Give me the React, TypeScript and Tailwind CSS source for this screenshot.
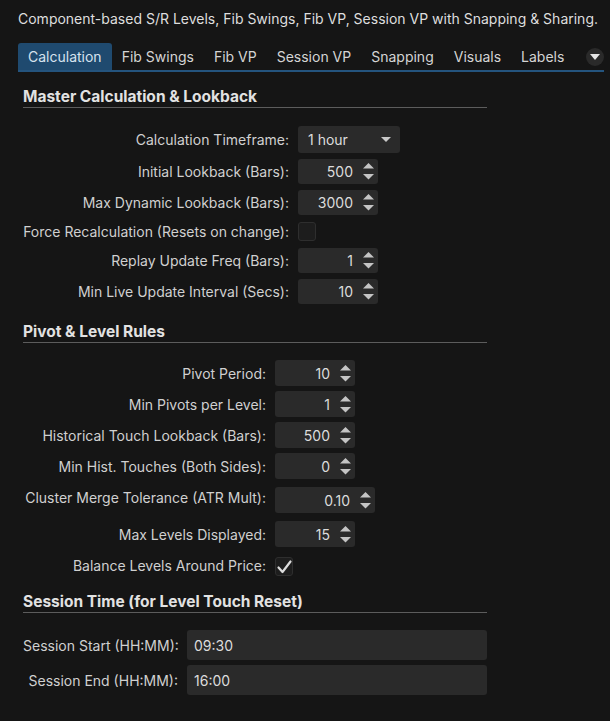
import React from "react";

const tabs = ["Calculation", "Fib Swings", "Fib VP", "Session VP", "Snapping", "Visuals", "Labels"];

function Arrows() {
  return (
    <svg width="11" height="17" viewBox="0 0 11 17" className="shrink-0 ml-[10px] mr-[4px]">
      <polygon points="0,5.5 5.5,0 11,5.5" fill="#c4c4c4" />
      <polygon points="0,11 11,11 5.5,16.5" fill="#c4c4c4" />
    </svg>
  );
}

function Spin({ value, wide, h = "h-[25px]" }: { value: string; wide?: boolean; h?: string }) {
  return (
    <div
      className={`${wide ? "w-[100px]" : "w-[80px]"} ${h} flex items-center justify-end rounded-[3px] bg-[#2a2a2a] text-[#dcdcdc]`}
    >
      <span className="flex-1 text-right">{value}</span>
      <Arrows />
    </div>
  );
}

function Check({ checked }: { checked?: boolean }) {
  return (
    <div className="w-[18px] h-[19px] rounded-[3px] bg-[#1d1d1d] border border-[#2e2e2e] flex items-center justify-center">
      {checked && (
        <svg width="15" height="14" viewBox="0 0 15 14">
          <path d="M1.5 7.5 L5.5 12 L13.5 1.5" stroke="#dcdcdc" strokeWidth="2.2" fill="none" strokeLinecap="round" strokeLinejoin="round" />
        </svg>
      )}
    </div>
  );
}

function Header({ title, className }: { title: string; className: string }) {
  return (
    <div className={`${className} h-[21px] leading-[20px] border-b border-[#5c5c5c] text-[15.5px] font-bold text-[#e2e2e2] whitespace-nowrap`}>
      {title}
    </div>
  );
}

function Label({ children, className = "" }: { children: React.ReactNode; className?: string }) {
  return <div className={`text-right text-[#d0d0d0] whitespace-nowrap ${className}`}>{children}</div>;
}

export default function App() {
  return (
    <div
      className="w-[610px] h-[721px] bg-[#151515] text-[14px] overflow-hidden"
      style={{ fontFamily: "Inter, 'Noto Sans', sans-serif" }}
    >
      <div className="px-[18px] pt-[10px] h-[27px] leading-[17px] text-[#dedede] whitespace-nowrap">
        Component-based S/R Levels, Fib Swings, Fib VP, Session VP with Snapping &amp; Sharing.
      </div>

      <div className="ml-[18px] mr-[6px] mt-[16px] h-[29px] flex items-stretch border-b-2 border-[#24547e] text-[14px]">
        {tabs.map((t, i) => (
          <div
            key={t}
            className={`px-[10px] flex items-center whitespace-nowrap rounded-t-[3px] ${
              i === 0 ? "bg-[#1f4a6f] text-[#d6e2ee]" : "text-[#d4d4d4]"
            }`}
          >
            {t}
          </div>
        ))}
        <div className="flex-1" />
        <div className="self-center w-[18px] h-[18px] rounded-full bg-[#2a2a2a] flex items-center justify-center">
          <svg width="10" height="6" viewBox="0 0 10 6">
            <polygon points="0,0 10,0 5,6" fill="#e6e6e6" />
          </svg>
        </div>
      </div>

      <div className="px-[23px] w-[464px] box-content">
        <Header title="Master Calculation & Lookback" className="mt-[15px]" />
        <div className="mt-[18px] grid grid-cols-[266px_1fr] gap-x-[9px] gap-y-[6px] items-center">
          <Label>Calculation Timeframe:</Label>
          <div className="w-[102px] h-[27px] rounded-[3px] bg-[#2a2a2a] flex items-center pl-[10px] pr-[9px] text-[#dcdcdc]">
            <span className="flex-1">1 hour</span>
            <svg width="10" height="5" viewBox="0 0 10 5">
              <polygon points="0,0 10,0 5,5" fill="#c8c8c8" />
            </svg>
          </div>
          <Label>Initial Lookback (Bars):</Label>
          <Spin value="500" />
          <Label>Max Dynamic Lookback (Bars):</Label>
          <Spin value="3000" />
          <Label>Force Recalculation (Resets on change):</Label>
          <div className="h-[21px] flex items-center">
            <Check />
          </div>
          <Label>Replay Update Freq (Bars):</Label>
          <Spin value="1" />
          <Label>Min Live Update Interval (Secs):</Label>
          <Spin value="10" />
        </div>

        <Header title="Pivot & Level Rules" className="mt-[18px]" />
        <div className="mt-[17px] grid grid-cols-[243px_1fr] gap-x-[9px] gap-y-[5px] items-center">
          <Label>Pivot Period:</Label>
          <Spin value="10" h="h-[26px]" />
          <Label>Min Pivots per Level:</Label>
          <Spin value="1" h="h-[26px]" />
          <Label>Historical Touch Lookback (Bars):</Label>
          <Spin value="500" h="h-[26px]" />
          <Label>Min Hist. Touches (Both Sides):</Label>
          <Spin value="0" h="h-[26px]" />
          <Label className="pb-[5px]">Cluster Merge Tolerance (ATR Mult):</Label>
          <div className="py-[3px] flex">
            <Spin value="0.10" wide h="h-[26px]" />
          </div>
          <Label>Max Levels Displayed:</Label>
          <Spin value="15" h="h-[26px]" />
          <Label className="pt-[3px]">Balance Levels Around Price:</Label>
          <div className="h-[24px] flex items-end">
            <Check checked />
          </div>
        </div>

        <Header title="Session Time (for Level Touch Reset)" className="mt-[16px]" />
        <div className="mt-[17px] grid grid-cols-[155px_1fr] gap-x-[9px] gap-y-[5px] items-center">
          <Label>Session Start (HH:MM):</Label>
          <div className="h-[30px] rounded-[3px] bg-[#2a2a2a] flex items-center px-[7px] text-[#dcdcdc]">09:30</div>
          <Label>Session End (HH:MM):</Label>
          <div className="h-[30px] rounded-[3px] bg-[#2a2a2a] flex items-center px-[7px] text-[#dcdcdc]">16:00</div>
        </div>
      </div>
    </div>
  );
}
